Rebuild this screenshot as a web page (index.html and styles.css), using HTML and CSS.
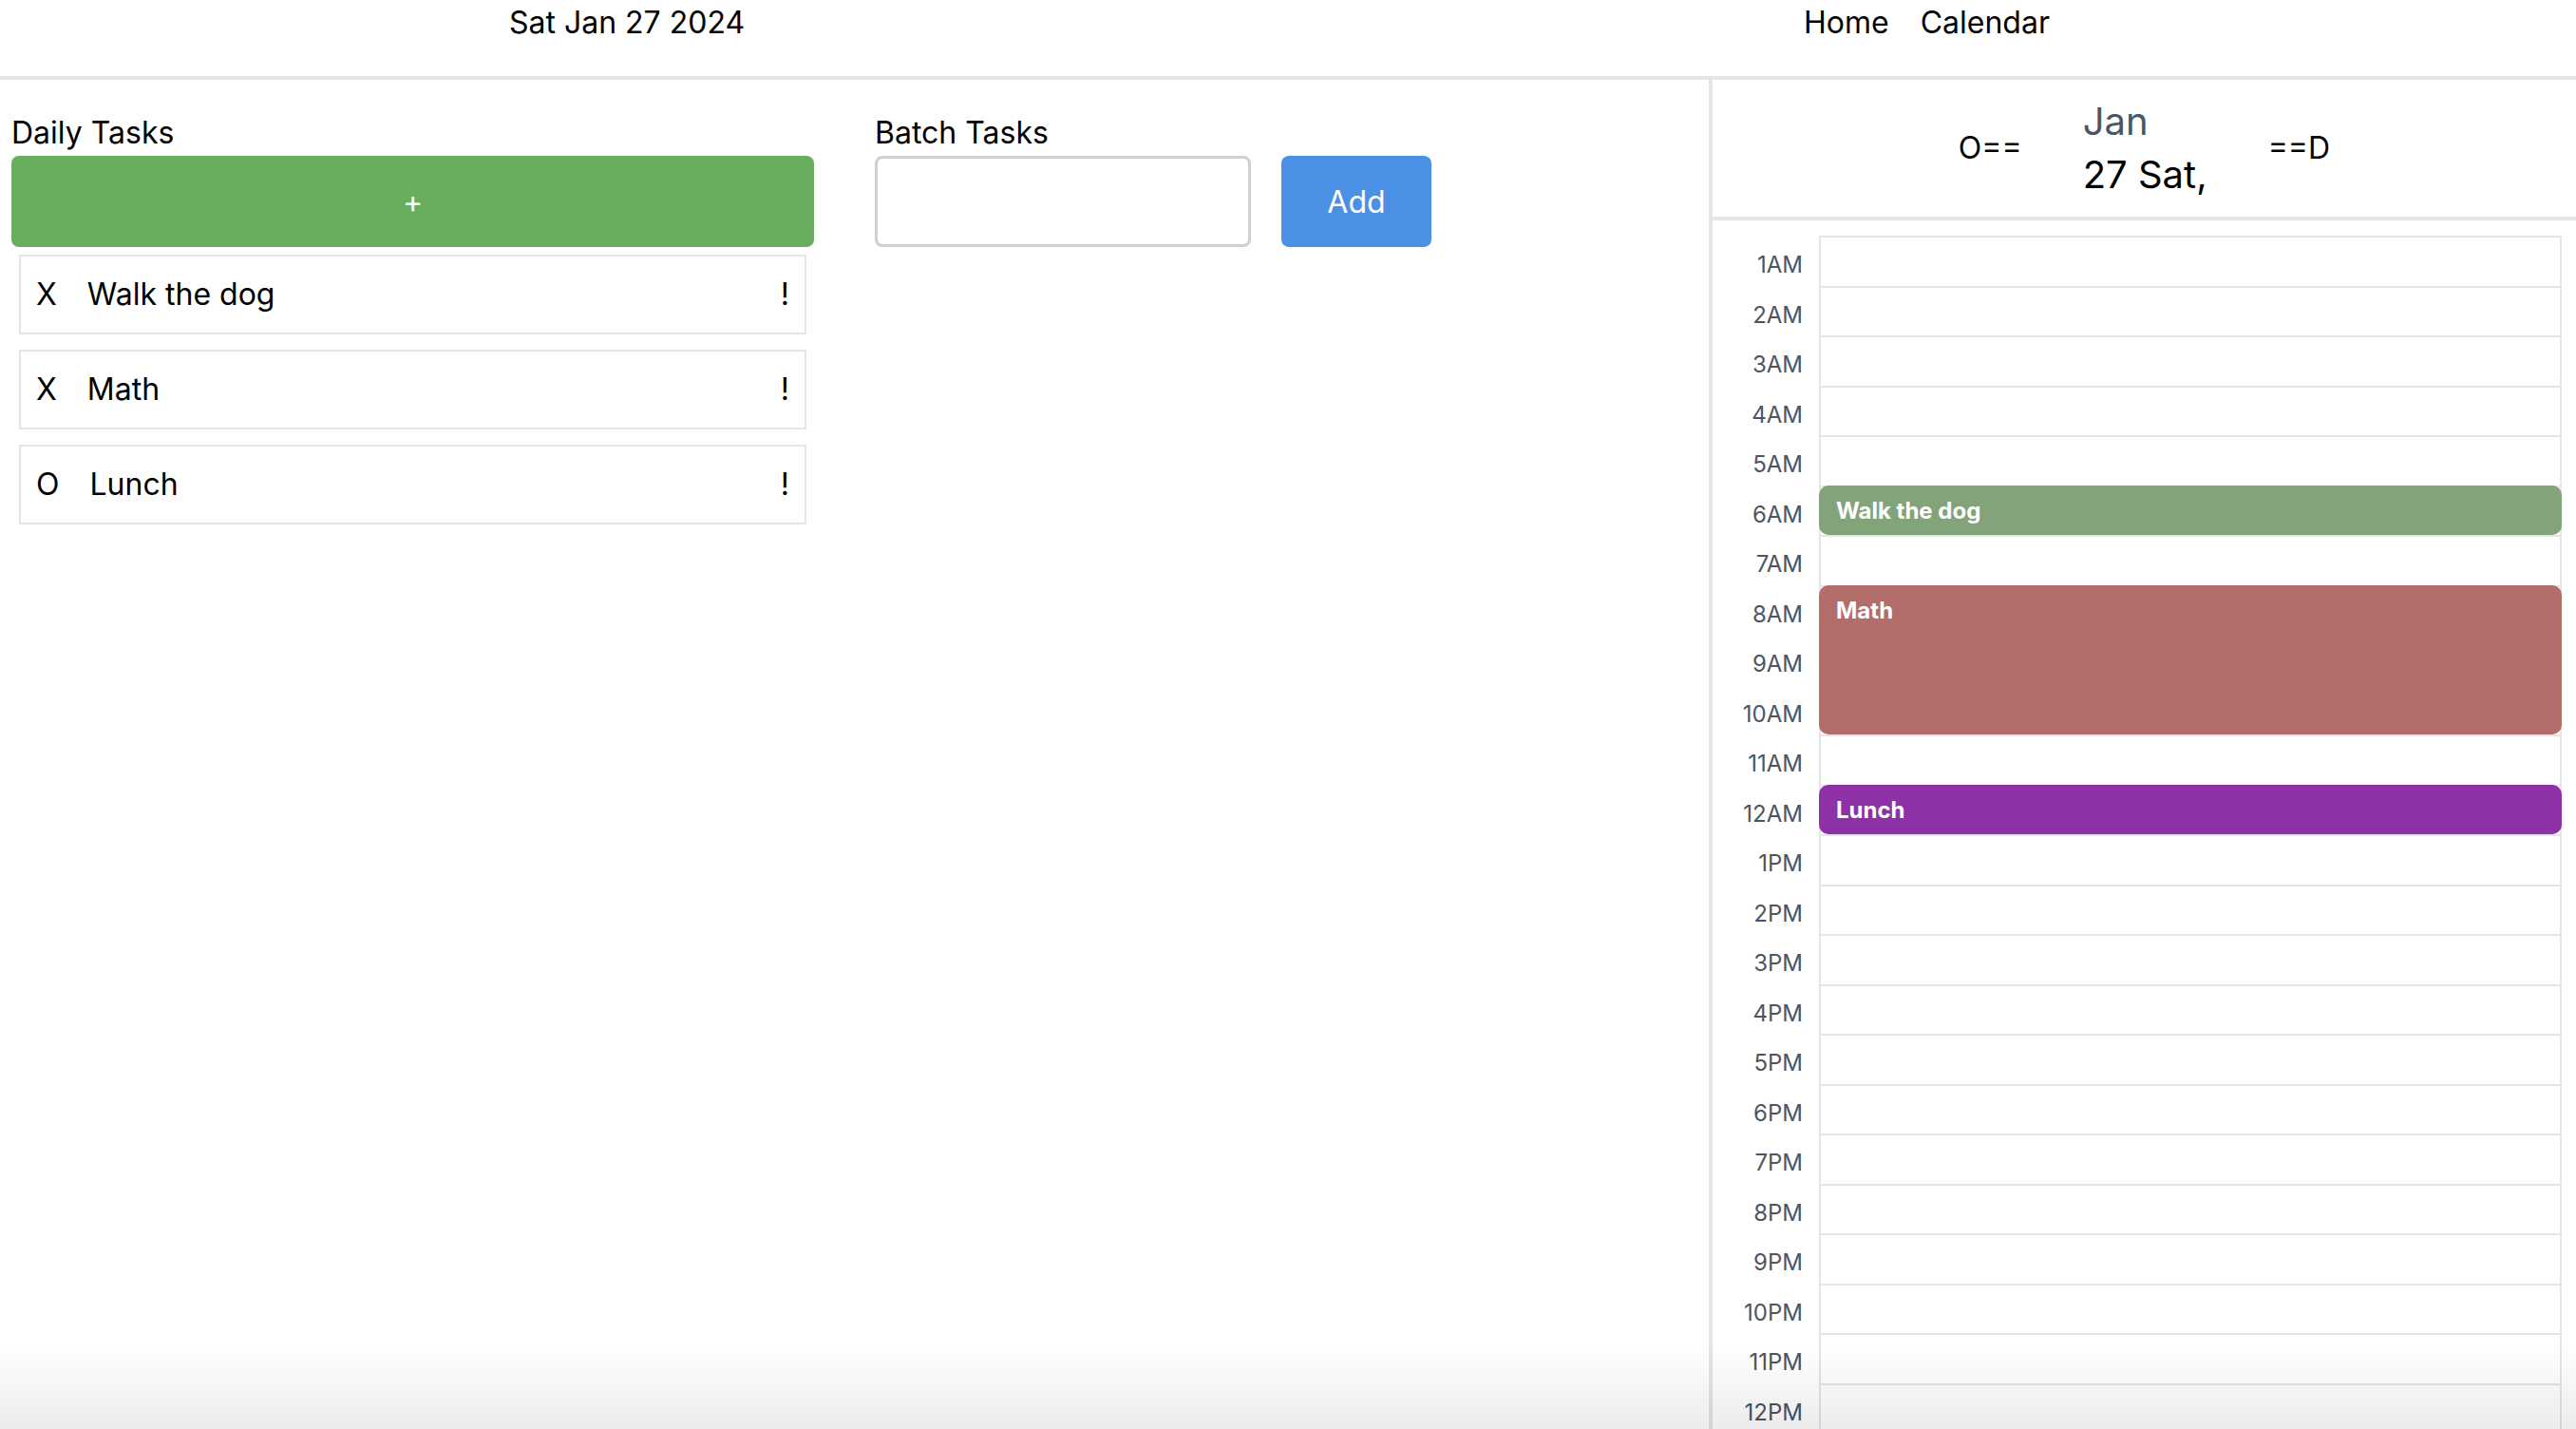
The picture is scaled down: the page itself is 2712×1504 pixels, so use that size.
FILE: index.html
```html
<!DOCTYPE html>
<html lang="en">
<head>
<meta charset="utf-8">
<title>Tasks</title>
<link rel="stylesheet" href="styles.css">
</head>
<body>
<header class="topbar">
  <div class="today">Sat Jan 27 2024</div>
  <nav class="nav"><a class="nav-link" href="#">Home</a><a class="nav-link" href="#">Calendar</a></nav>
</header>
<main class="layout">
  <section class="tasks-panel">
    <div class="col daily">
      <h2 class="col-title">Daily Tasks</h2>
      <button class="add-daily" type="button">+</button>
      <ul class="task-list">
        <li class="task"><span class="mark">X</span><span class="name">Walk the dog</span><span class="prio">!</span></li>
        <li class="task"><span class="mark">X</span><span class="name">Math</span><span class="prio">!</span></li>
        <li class="task"><span class="mark">O</span><span class="name">Lunch</span><span class="prio">!</span></li>
      </ul>
    </div>
    <div class="col batch">
      <h2 class="col-title">Batch Tasks</h2>
      <div class="batch-form">
        <input class="batch-input" type="text">
        <button class="add-btn" type="button">Add</button>
      </div>
    </div>
  </section>
  <aside class="calendar">
    <div class="cal-head">
      <span class="cal-arrow">O==</span>
      <div class="cal-date">
        <div class="month">Jan</div>
        <div class="day">27 Sat,</div>
      </div>
      <span class="cal-arrow">==D</span>
    </div>
    <div class="cal-body">
      <div class="hours">
        <div class="hour">1AM</div>
        <div class="hour">2AM</div>
        <div class="hour">3AM</div>
        <div class="hour">4AM</div>
        <div class="hour">5AM</div>
        <div class="hour">6AM</div>
        <div class="hour">7AM</div>
        <div class="hour">8AM</div>
        <div class="hour">9AM</div>
        <div class="hour">10AM</div>
        <div class="hour">11AM</div>
        <div class="hour">12AM</div>
        <div class="hour">1PM</div>
        <div class="hour">2PM</div>
        <div class="hour">3PM</div>
        <div class="hour">4PM</div>
        <div class="hour">5PM</div>
        <div class="hour">6PM</div>
        <div class="hour">7PM</div>
        <div class="hour">8PM</div>
        <div class="hour">9PM</div>
        <div class="hour">10PM</div>
        <div class="hour">11PM</div>
        <div class="hour">12PM</div>
      </div>
      <div class="slots">
        <div class="slot"></div><div class="slot"></div><div class="slot"></div><div class="slot"></div>
        <div class="slot"></div><div class="slot"></div><div class="slot"></div><div class="slot"></div>
        <div class="slot"></div><div class="slot"></div><div class="slot"></div><div class="slot"></div>
        <div class="slot"></div><div class="slot"></div><div class="slot"></div><div class="slot"></div>
        <div class="slot"></div><div class="slot"></div><div class="slot"></div><div class="slot"></div>
        <div class="slot"></div><div class="slot"></div><div class="slot"></div><div class="slot"></div>
        <div class="event event-walk" style="top:262.5px;height:52.5px">Walk the dog</div>
        <div class="event event-math" style="top:367.5px;height:157.5px">Math</div>
        <div class="event event-lunch" style="top:577.5px;height:52.5px">Lunch</div>
      </div>
    </div>
  </aside>
</main>
</body>
</html>
```

FILE: styles.css
```css
html, body {
  margin: 0;
  height: 100%;
  overflow: hidden;
}
body {
  font-family: Inter, "Noto Sans", "Liberation Sans", sans-serif;
  font-size: 32px;
  line-height: 48px;
  color: #000;
  background: #fff;
}
body::after {
  content: "";
  position: fixed;
  left: 0;
  right: 0;
  bottom: 0;
  height: 90px;
  background: linear-gradient(rgba(0, 0, 0, 0), rgba(0, 0, 0, 0.075));
  pointer-events: none;
}

/* top bar */
.topbar {
  display: flex;
  height: 84px;
  box-sizing: border-box;
  border-bottom: 4px solid #e5e5e5;
}
.today {
  width: 1320px;
  text-align: center;
}
.nav {
  display: flex;
  gap: 33px;
  padding-left: 579px;
}
.nav-link {
  color: #000;
  text-decoration: none;
}

/* layout */
.layout {
  display: flex;
  height: calc(100% - 84px);
}
.tasks-panel {
  width: 1803px;
  flex-shrink: 0;
  box-sizing: border-box;
  border-right: 4px solid #e5e5e5;
  padding: 32px 12px;
  display: flex;
  align-items: flex-start;
  gap: 64px;
}
.col {
  display: flex;
  flex-direction: column;
}
.daily {
  width: 845px;
}
.col-title {
  margin: 0;
  font-size: 32px;
  font-weight: 400;
  line-height: 48px;
}
.add-daily {
  height: 96px;
  border: 0;
  border-radius: 8px;
  background: #69ae5e;
  color: #fff;
  font-family: inherit;
  font-size: 32px;
  padding: 0;
}
.task-list {
  list-style: none;
  margin: 0;
  padding: 0;
  display: flex;
  flex-direction: column;
}
.task {
  margin: 8px;
  display: flex;
  align-items: center;
  border: 2px solid #e5e5e5;
  padding: 16px;
}
.mark {
  margin-right: 32px;
}
.prio {
  margin-left: auto;
}
.batch-form {
  display: flex;
  gap: 32px;
}
.batch-input {
  width: 396px;
  height: 96px;
  box-sizing: border-box;
  border: 3px solid #d0d0d0;
  border-radius: 8px;
  font-family: inherit;
  font-size: 32px;
  padding: 0 16px;
}
.add-btn {
  width: 158px;
  height: 96px;
  border: 0;
  border-radius: 8px;
  background: #4a91e6;
  color: #fff;
  font-family: inherit;
  font-size: 32px;
  padding: 0;
}

/* calendar */
.calendar {
  flex: 1;
  display: flex;
  flex-direction: column;
}
.cal-head {
  flex-shrink: 0;
  height: 148px;
  box-sizing: border-box;
  border-bottom: 4px solid #e5e5e5;
  display: flex;
  align-items: center;
  justify-content: center;
  gap: 64px;
}
.cal-date {
  font-size: 40px;
  line-height: 56px;
}
.month {
  color: #4b5563;
}
.cal-body {
  flex-shrink: 0;
  display: flex;
  padding-top: 16px;
}
.hours {
  width: 112px;
  box-sizing: border-box;
  padding-right: 17px;
  text-align: right;
  color: #4b5563;
  font-size: 24px;
  line-height: 32px;
}
.hour {
  height: 52.5px;
  box-sizing: border-box;
  padding-top: 15px;
}
.slots {
  flex: 1;
  margin-right: 15px;
  position: relative;
}
.slot {
  height: 52.5px;
  box-sizing: border-box;
  border: 2px solid #e5e5e5;
  border-bottom: 0;
}
.event {
  position: absolute;
  left: 0;
  right: 0;
  box-sizing: border-box;
  border-radius: 10px;
  padding: 11px 18px;
  color: #fff;
  font-size: 24px;
  font-weight: 700;
  line-height: 32px;
}
.event-walk {
  background: #83a37b;
}
.event-math {
  background: #b36e6b;
}
.event-lunch {
  background: #8f31a6;
}
```
